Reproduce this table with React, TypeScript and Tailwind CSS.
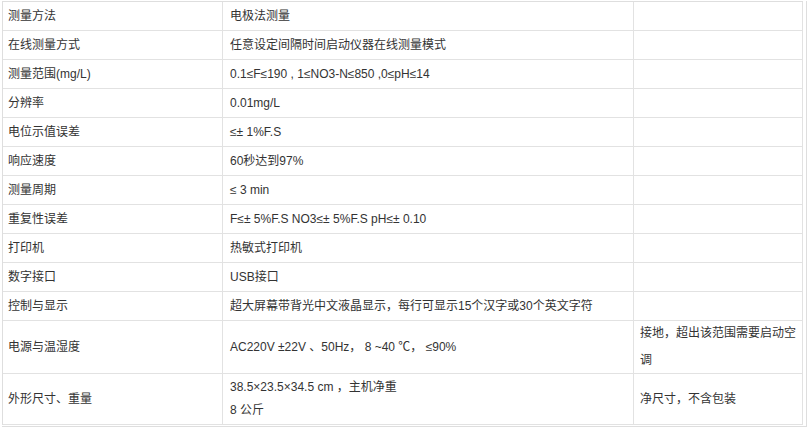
const rows: { name: string; value: React.ReactNode; note?: React.ReactNode; h: string }[] = [
  { name: "测量方法", value: "电极法测量", h: "h-[29px]" },
  { name: "在线测量方式", value: "任意设定间隔时间启动仪器在线测量模式", h: "h-[29px]" },
  { name: "测量范围(mg/L)", value: "0.1≤F≤190 , 1≤NO3-N≤850 ,0≤pH≤14", h: "h-[29px]" },
  { name: "分辨率", value: "0.01mg/L", h: "h-[29px]" },
  { name: "电位示值误差", value: "≤± 1%F.S", h: "h-[29px]" },
  { name: "响应速度", value: "60秒达到97%", h: "h-[29px]" },
  { name: "测量周期", value: "≤ 3 min", h: "h-[29px]" },
  { name: "重复性误差", value: "F≤± 5%F.S NO3≤± 5%F.S pH≤± 0.10", h: "h-[29px]" },
  { name: "打印机", value: "热敏式打印机", h: "h-[29px]" },
  { name: "数字接口", value: "USB接口", h: "h-[29px]" },
  { name: "控制与显示", value: "超大屏幕带背光中文液晶显示，每行可显示15个汉字或30个英文字符", h: "h-[29px]" },
  {
    name: "电源与温湿度",
    value: "AC220V ±22V 、50Hz， 8 ~40 ℃， ≤90%",
    note: <div className="leading-[27px]">接地，超出该范围需要启动空调</div>,
    h: "h-[53px]",
  },
  {
    name: "外形尺寸、重量",
    value: (
      <div className="leading-[23px]">
        <div>38.5×23.5×34.5 cm ，主机净重</div>
        <div>8 公斤</div>
      </div>
    ),
    note: "净尺寸，不含包装",
    h: "h-[51px]",
  },
];

export default function App() {
  return (
    <div className="min-h-screen bg-white pt-px text-[12px] text-[#333] [font-family:'Liberation_Sans','Noto_Sans_CJK_SC',sans-serif]">
      <div className="ml-[2px] w-[805px] border-r border-b border-[#dedede] pr-[3px] pb-px">
        <div className="w-[801px] border-l border-t border-[#dedede]">
          {rows.map((r) => (
            <div key={r.name} className={`flex border-b border-[#e2e2e2] ${r.h}`}>
              <div className="flex w-[220px] shrink-0 items-center border-r border-[#e2e2e2] pl-[5px]">
                {r.name}
              </div>
              <div className="flex w-[411px] shrink-0 items-center border-r border-[#e2e2e2] pl-[7px]">
                {r.value}
              </div>
              <div className="flex w-[169px] shrink-0 items-center border-r border-[#e2e2e2] pl-[6px] pr-[4px]">
                {r.note}
              </div>
            </div>
          ))}
        </div>
      </div>
    </div>
  );
}
